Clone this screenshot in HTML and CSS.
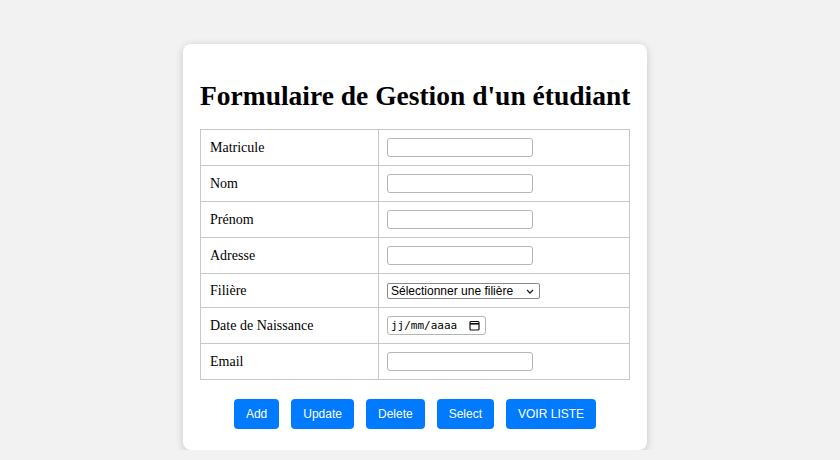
FILE: index.html
```html
<!DOCTYPE html>
<html lang="fr">
<head>
<meta charset="utf-8">
<title>Gestion étudiant</title>
<link rel="stylesheet" href="styles.css">
</head>
<body>
<div class="card">
  <h1 class="title">Formulaire de Gestion d'un étudiant</h1>
  <table class="form-table">
    <tr class="row"><td class="label">Matricule</td><td class="field"><input class="text-input" type="text"></td></tr>
    <tr class="row"><td class="label">Nom</td><td class="field"><input class="text-input" type="text"></td></tr>
    <tr class="row"><td class="label">Prénom</td><td class="field"><input class="text-input" type="text"></td></tr>
    <tr class="row"><td class="label">Adresse</td><td class="field"><input class="text-input" type="text"></td></tr>
    <tr class="row row-select"><td class="label">Filière</td><td class="field">
      <div class="select-wrap">
        <select class="select-input"><option>Sélectionner une filière</option></select>
        <svg class="chevron" width="8" height="5" viewBox="0 0 8 5"><path d="M1 1 L4 4 L7 1" fill="none" stroke="#222" stroke-width="1.3"/></svg>
      </div>
    </td></tr>
    <tr class="row"><td class="label">Date de Naissance</td><td class="field">
      <div class="date-input"><span class="date-text">jj/mm/aaaa</span>
        <svg class="cal-icon" width="11" height="11" viewBox="0 0 11 11"><rect x="1" y="1.5" width="9" height="8.5" rx="1" fill="none" stroke="#111" stroke-width="1.2"/><line x1="1" y1="3.8" x2="10" y2="3.8" stroke="#111" stroke-width="1.6"/></svg>
      </div>
    </td></tr>
    <tr class="row"><td class="label">Email</td><td class="field"><input class="text-input" type="email"></td></tr>
  </table>
  <div class="actions">
    <button class="btn">Add</button>
    <button class="btn">Update</button>
    <button class="btn">Delete</button>
    <button class="btn">Select</button>
    <button class="btn">VOIR LISTE</button>
  </div>
</div>
</body>
</html>
```
FILE: styles.css
```css
html, body {
  margin: 0;
  padding: 0;
}
body {
  background: #f2f2f2;
  font-family: "Liberation Serif", "Times New Roman", serif;
  font-size: 14px;
  color: #000;
  padding: 44px 10px 0 0;
}
.card {
  width: 430px;
  margin: 0 auto;
  background: #fff;
  border-radius: 8px;
  box-shadow: 0 2px 8px rgba(0, 0, 0, 0.18);
  padding: 36px 17px 21px;
  box-sizing: content-box;
}
.title {
  font-size: 27.5px;
  font-weight: bold;
  text-align: center;
  white-space: nowrap;
  margin: 0 0 17px;
  line-height: 32px;
}
.form-table {
  width: 430px;
  border-collapse: collapse;
}
.label, .field {
  border: 1px solid #c8c8c8;
  padding: 8px 8px 8px 9px;
  text-align: left;
  vertical-align: middle;
  height: 19px;
}
.label {
  width: 160px;
}
.field {
  padding-left: 8px;
}
.row-select .label, .row-select .field {
  height: 17px;
}
.text-input {
  display: block;
  width: 146px;
  height: 19px;
  box-sizing: border-box;
  border: 1px solid #b5b5b5;
  border-radius: 3px;
  padding: 1px 2px;
  margin: 0;
  font-size: 12px;
}
.select-wrap {
  position: relative;
  width: 153px;
  height: 16px;
}
.select-input {
  display: block;
  appearance: none;
  -webkit-appearance: none;
  width: 153px;
  height: 16px;
  box-sizing: border-box;
  border: 1px solid #8a8a8a;
  border-radius: 2px;
  background: #fff;
  color: #000;
  font-family: "Liberation Sans", Arial, sans-serif;
  font-size: 12px;
  line-height: 14px;
  margin: 0;
  padding: 0 0 0 3px;
}
.chevron {
  position: absolute;
  right: 6px;
  top: 6px;
  pointer-events: none;
}
.date-input {
  display: flex;
  align-items: center;
  justify-content: space-between;
  width: 99px;
  height: 19px;
  box-sizing: border-box;
  font-family: "DejaVu Sans Mono", monospace;
  font-size: 11px;
  padding: 0 5px 0 3px;
  border: 1px solid #b5b5b5;
  border-radius: 3px;
  background: #fff;
}
.date-text {
  line-height: 17px;
}
.cal-icon {
  display: block;
}
.actions {
  display: flex;
  justify-content: center;
  gap: 12px;
  margin-top: 19px;
}
.btn {
  background: #007bff;
  color: #fff;
  border: none;
  border-radius: 4px;
  font-family: "Liberation Sans", Arial, sans-serif;
  font-size: 12px;
  line-height: 14px;
  padding: 8px 12px;
  cursor: pointer;
}
```
